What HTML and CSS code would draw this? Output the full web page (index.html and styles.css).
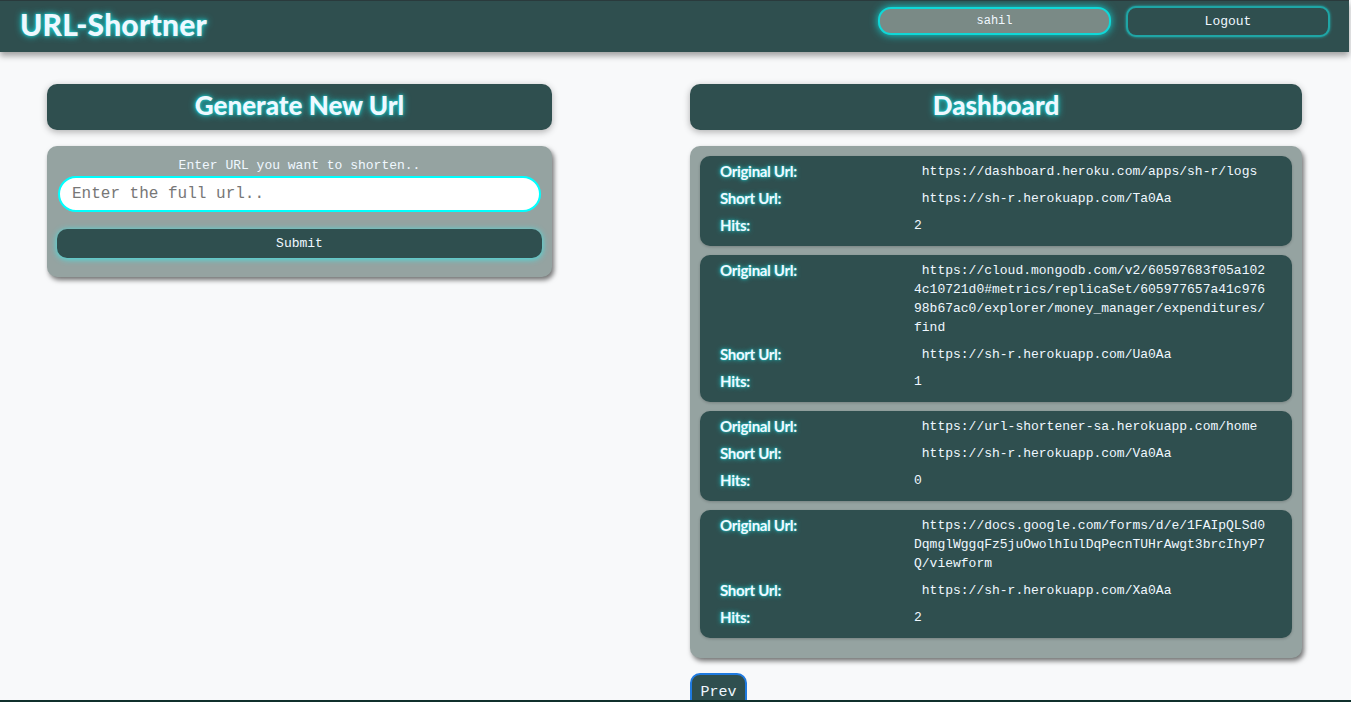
FILE: index.html
```html
<!DOCTYPE html>
<html>
<head>
<meta charset="utf-8">
<title>URL-Shortner</title>
<link rel="stylesheet" href="styles.css">
</head>
<body>
<nav class="navbar">
  <div class="brand">URL-Shortner</div>
  <div class="nav-actions">
    <button class="user-btn">sahil</button>
    <button class="logout-btn">Logout</button>
  </div>
</nav>
<main class="main">
  <section class="col-left">
    <h2 class="panel-title">Generate New Url</h2>
    <form class="gen-card">
      <label class="gen-label">Enter URL you want to shorten..</label>
      <input class="url-input" type="text" placeholder="Enter the full url..">
      <button type="button" class="submit-btn">Submit</button>
    </form>
  </section>
  <section class="col-right">
    <h2 class="panel-title">Dashboard</h2>
    <div class="dash">
      <div class="url-card">
        <div class="lbl">Original Url:</div><div class="val">&nbsp;https://dashboard.heroku.com/apps/sh-r/logs</div>
        <div class="lbl">Short Url:</div><div class="val">&nbsp;https://sh-r.herokuapp.com/Ta0Aa</div>
        <div class="lbl">Hits:</div><div class="val">2</div>
      </div>
      <div class="url-card">
        <div class="lbl">Original Url:</div><div class="val">&nbsp;https://cloud.mongodb.com/v2/60597683f05a1024c10721d0#metrics/replicaSet/605977657a41c97698b67ac0/explorer/money_manager/expenditures/find</div>
        <div class="lbl">Short Url:</div><div class="val">&nbsp;https://sh-r.herokuapp.com/Ua0Aa</div>
        <div class="lbl">Hits:</div><div class="val">1</div>
      </div>
      <div class="url-card">
        <div class="lbl">Original Url:</div><div class="val">&nbsp;https://url-shortener-sa.herokuapp.com/home</div>
        <div class="lbl">Short Url:</div><div class="val">&nbsp;https://sh-r.herokuapp.com/Va0Aa</div>
        <div class="lbl">Hits:</div><div class="val">0</div>
      </div>
      <div class="url-card">
        <div class="lbl">Original Url:</div><div class="val">&nbsp;https://docs.google.com/forms/d/e/1FAIpQLSd0DqmglWggqFz5juOwolhIulDqPecnTUHrAwgt3brcIhyP7Q/viewform</div>
        <div class="lbl">Short Url:</div><div class="val">&nbsp;https://sh-r.herokuapp.com/Xa0Aa</div>
        <div class="lbl">Hits:</div><div class="val">2</div>
      </div>
    </div>
    <div class="pager">
      <button class="prev-btn">Prev</button>
    </div>
  </section>
</main>
<footer class="footer"></footer>
</body>
</html>
```

FILE: styles.css
```css
* { box-sizing: border-box; }
html, body { margin: 0; padding: 0; }
body {
  background: #f8f9fa;
  font-family: "Liberation Mono", monospace;
  height: 702px;
  overflow: hidden;
  position: relative;
}
.navbar {
  height: 52px;
  width: 1349px;
  background: #2f4f4f;
  border-top: 1px solid #2a3a3c;
  display: flex;
  align-items: center;
  justify-content: space-between;
  padding: 0 19px 0 20px;
  box-shadow: 0 4px 6px rgba(0,0,0,0.35);
  position: relative;
  z-index: 2;
}
.brand {
  font-family: Lato, "Open Sans", sans-serif;
  font-weight: 900;
  font-size: 30px;
  letter-spacing: 0.2px;
  color: #eef8ff;
  text-shadow: 0 0 7px #18d6d6, 0 0 3px #18d6d6;
  margin-top: -5px;
}
.nav-actions {
  display: flex;
  align-items: center;
  gap: 15px;
  margin-top: -11px;
}
.user-btn {
  width: 233px;
  height: 28px;
  background: #7a8a86;
  border: 2px solid #10d8d8;
  border-radius: 13px;
  color: #f0f8ff;
  font-family: "Liberation Mono", monospace;
  font-size: 12px;
  box-shadow: 0 0 8px #10d8d8;
  padding: 0;
}
.logout-btn {
  width: 204px;
  height: 31px;
  background: #2f4f4f;
  border: 2px solid #1fa5a5;
  border-radius: 10px;
  color: #f0f8ff;
  font-family: "Liberation Mono", monospace;
  font-size: 13px;
  box-shadow: 0 0 3px #1fb5b5;
  padding: 0;
}
.main {
  display: flex;
  align-items: flex-start;
  padding: 32px 0 0 47px;
  gap: 138px;
}
.col-left { width: 505px; }
.col-right { width: 612px; }
.panel-title {
  margin: 0;
  height: 46px;
  background: #2f4f4f;
  border-radius: 10px;
  color: #eef8ff;
  font-family: Lato, "Open Sans", sans-serif;
  font-weight: 900;
  font-size: 26px;
  line-height: 42px;
  text-align: center;
  text-shadow: 0 0 7px #18d6d6, 0 0 3px #18d6d6;
  box-shadow: 0 2px 7px rgba(0,0,0,0.3);
}
.gen-card {
  margin-top: 16px;
  background: #95a3a1;
  border-radius: 10px;
  padding: 12px 10px 19px 10px;
  display: flex;
  flex-direction: column;
  box-shadow: 2px 3px 5px rgba(0,0,0,0.55);
}
.gen-label {
  text-align: center;
  color: #f0f8ff;
  font-size: 13px;
  line-height: 16px;
  margin-bottom: 2px;
}
.url-input {
  width: 483px;
  margin-left: 1px;
  height: 36px;
  border: 2px solid #00ffff;
  border-radius: 18px;
  background: #ffffff;
  font-family: "Liberation Mono", monospace;
  font-size: 16px;
  padding: 0 12px;
  outline: none;
}
.url-input::placeholder { color: #777; }
.submit-btn {
  margin-top: 17px;
  height: 29px;
  width: 485px;
  background: #2f4f4f;
  border: none;
  border-radius: 10px;
  color: #f0f8ff;
  font-family: "Liberation Mono", monospace;
  font-size: 13px;
  box-shadow: 0 1px 6px #3ee6e6;
}
.dash {
  margin-top: 16px;
  background: #95a3a1;
  border-radius: 10px;
  padding: 10px 10px 11px 10px;
  box-shadow: 2px 3px 5px rgba(0,0,0,0.55);
}
.url-card {
  background: #2f4f4f;
  border-radius: 10px;
  padding: 6px 20px 11px 20px;
  margin-bottom: 9px;
  display: grid;
  grid-template-columns: 194px 354px;
  grid-auto-rows: 19px;
  row-gap: 8px;
  box-shadow: 0 1px 3px rgba(0,0,0,0.2);
}
.url-card:nth-child(2) { grid-template-rows: 76px 19px 19px; }
.url-card:nth-child(4) { grid-template-rows: 57px 19px 19px; }
.lbl {
  font-family: Lato, "Open Sans", sans-serif;
  font-weight: 700;
  font-size: 15px;
  line-height: 19px;
  color: #f0f8ff;
  letter-spacing: -0.3px;
  text-shadow: 0 0 5px #20c8c8, 0 0 2px #20c8c8;
}
.val {
  font-size: 13px;
  line-height: 19px;
  color: #f0f8ff;
  word-break: break-all;
}
.pager {
  margin-top: 15px;
}
.prev-btn {
  width: 57px;
  height: 40px;
  background: #2f4f4f;
  border: 2px solid #1f7ae0;
  border-radius: 10px;
  color: #f0f8ff;
  font-family: "Liberation Mono", monospace;
  font-size: 15px;
  padding: 0;
  line-height: 16px;
  text-align: center;
  vertical-align: top;
  display: flex;
  align-items: flex-start;
  justify-content: center;
  padding-top: 10px;
}
.footer {
  position: absolute;
  left: 0;
  right: 0;
  top: 700px;
  height: 2px;
  background: #10302c;
}
```
